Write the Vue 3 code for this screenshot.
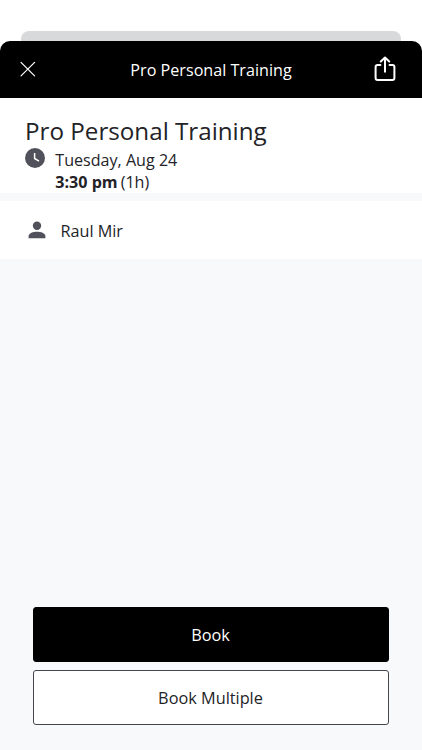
<script setup>
const booking = {
  title: 'Pro Personal Training',
  date: 'Tuesday, Aug 24',
  time: '3:30 pm',
  duration: '(1h)',
  trainer: 'Raul Mir',
}
</script>

<template>
  <div class="screen">
    <div class="back-sheet"></div>
    <main class="sheet">
      <header class="bar">
        <button class="icon-btn" aria-label="Close">
          <svg width="16" height="16" viewBox="0 0 16 16">
            <path d="M1 1.3 14.6 14.9M14.6 1.3 1 14.9" fill="none" stroke="#fff" stroke-width="1.2" stroke-linecap="round" />
          </svg>
        </button>
        <h1 class="bar-title">{{ booking.title }}</h1>
        <button class="icon-btn" aria-label="Share">
          <svg width="22" height="26" viewBox="0 0 22 26">
            <path d="M6.4 8.9H3.6Q1.6 8.9 1.6 10.9V22.1Q1.6 24.1 3.6 24.1H18.4Q20.4 24.1 20.4 22.1V10.9Q20.4 8.9 18.4 8.9H15.6M11 15.8V1.8M6.8 5.5 11 1.6 15.2 5.5" fill="none" stroke="#fff" stroke-width="2" stroke-linecap="round" stroke-linejoin="round" />
          </svg>
        </button>
      </header>
      <section class="summary">
        <h2 class="title">{{ booking.title }}</h2>
        <div class="when">
          <svg class="clock" width="20" height="20" viewBox="0 0 20 20">
            <circle cx="10" cy="10" r="10" fill="#51515b" />
            <path d="M9.6 4.9V10.5L14 13.1" fill="none" stroke="#fff" stroke-width="1.5" />
          </svg>
          <div class="lines">
            <div>{{ booking.date }}</div>
            <div><b>{{ booking.time }}</b><span class="duration">{{ booking.duration }}</span></div>
          </div>
        </div>
      </section>
      <section class="trainer">
        <svg width="18" height="18" viewBox="0 0 18 18">
          <circle cx="9" cy="4.8" r="4.2" fill="#51515b" />
          <path d="M.6 17.2V15C.6 12.2 5.2 10.7 9 10.7S17.4 12.2 17.4 15V17.2Z" fill="#51515b" />
        </svg>
        <span class="name">{{ booking.trainer }}</span>
      </section>
      <footer class="actions">
        <button class="btn primary">Book</button>
        <button class="btn">Book Multiple</button>
      </footer>
    </main>
  </div>
</template>

<style>
body {
  margin: 0;
  background: #fff;
}
</style>

<style scoped>
.screen {
  box-sizing: border-box;
  height: 750px;
  padding-top: 31px;
  display: flex;
  flex-direction: column;
  overflow: hidden;
  font-family: "Open Sans", sans-serif;
  font-size: 16.1px;
  color: #232327;
}
.back-sheet {
  height: 26px;
  flex: none;
  margin: 0 21px -16px;
  border-radius: 8px 8px 0 0;
  background: #d8d9db;
}
.sheet {
  position: relative;
  flex: 1;
  display: flex;
  flex-direction: column;
  overflow: hidden;
  border-radius: 10px 10px 0 0;
  background: #f8f9fb;
}
.bar {
  box-sizing: border-box;
  height: 57px;
  padding: 0 26px 0 20px;
  display: grid;
  grid-template-columns: 28px 1fr 22px;
  align-items: center;
  background: #000;
  color: #fff;
}
.bar-title {
  margin: 0;
  text-align: center;
  font-size: 16.15px;
  font-weight: 400;
  line-height: 22px;
}
.icon-btn {
  padding: 0 0 1px;
  border: 0;
  background: none;
  display: flex;
}
.summary {
  box-sizing: border-box;
  height: 95px;
  padding: 16px 25px 0;
  background: #fff;
}
.title {
  margin: 0;
  font-size: 24.2px;
  font-weight: 400;
  line-height: 33px;
}
.when {
  display: flex;
  gap: 10.3px;
  padding-top: 1px;
}
.lines {
  padding-top: 1px;
  line-height: 22px;
}
.duration {
  margin-left: 3px;
}
.trainer {
  box-sizing: border-box;
  height: 58px;
  margin-top: 8px;
  padding: 0 28px;
  display: flex;
  align-items: center;
  gap: 14.5px;
  background: #fff;
}
.name {
  padding-top: 1px;
  line-height: 22px;
  font-size: 16.2px;
}
.actions {
  margin-top: auto;
  padding: 0 33px 25px;
  display: flex;
  flex-direction: column;
  gap: 8px;
}
.btn {
  box-sizing: border-box;
  height: 55px;
  padding: 0 1px 0 0;
  border: 1px solid #45454d;
  border-radius: 3px;
  background: #fff;
  color: #232327;
  font: inherit;
  font-size: 16.3px;
}
.primary {
  border-color: #000;
  background: #000;
  color: #fff;
}
</style>
